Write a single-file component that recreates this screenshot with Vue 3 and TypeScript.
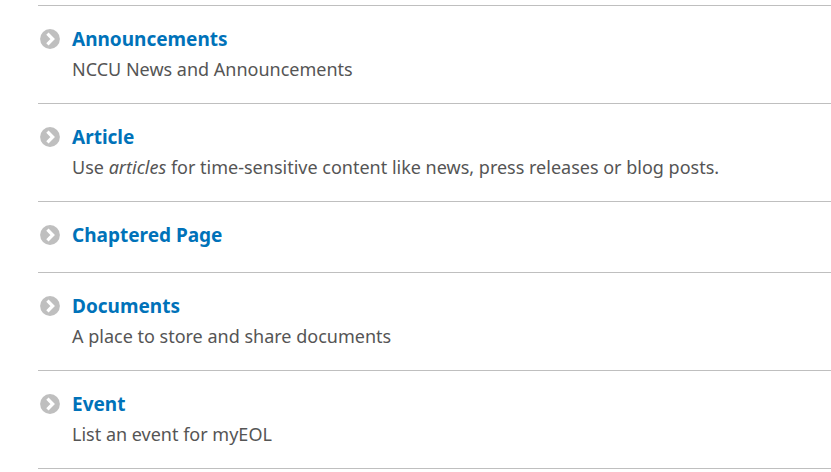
<script setup lang="ts">
interface ContentType {
  name: string
  before?: string
  emphasis?: string
  after?: string
}

const types: ContentType[] = [
  { name: 'Announcements', before: 'NCCU News and Announcements' },
  {
    name: 'Article',
    before: 'Use ',
    emphasis: 'articles',
    after: ' for time-sensitive content like news, press releases or blog posts.',
  },
  { name: 'Chaptered Page' },
  { name: 'Documents', before: 'A place to store and share documents' },
  { name: 'Event', before: 'List an event for myEOL' },
]
</script>

<template>
  <main class="page">
    <ul class="list">
      <li v-for="t in types" :key="t.name" class="item">
        <svg class="icon" viewBox="0 0 20 20" aria-hidden="true">
          <circle cx="10" cy="10" r="9.9" fill="#bfbfbf" />
          <path d="M7.4 4.7 12.7 10l-5.3 5.3" fill="none" stroke="#fff" stroke-width="3.2" />
        </svg>
        <div class="body">
          <a class="name" href="#">{{ t.name }}</a>
          <p v-if="t.before" class="text">{{ t.before }}<em v-if="t.emphasis">{{ t.emphasis }}</em>{{ t.after }}</p>
        </div>
      </li>
    </ul>
  </main>
</template>

<style>
body {
  background: #fff;
}
</style>

<style scoped>
.page {
  padding: 5px 0 0 38px;
  font-family: "Lucida Sans", "Noto Sans", sans-serif;
  color: #555;
}
.list {
  list-style: none;
  margin: 0;
  padding: 0;
  border-bottom: 1px solid #bfbfbf;
}
.item {
  display: flex;
  gap: 12px;
  padding: 20px 0 24px 2px;
  border-top: 1px solid #bfbfbf;
}
.icon {
  flex: none;
  width: 20px;
  height: 20px;
  margin-top: 3px;
}
.name {
  display: block;
  font-size: 19px;
  line-height: 26px;
  font-weight: 700;
  color: #0072b9;
  text-decoration: none;
}
.text {
  margin: 7px 0 0;
  font-size: 18px;
  line-height: 20px;
}
</style>
